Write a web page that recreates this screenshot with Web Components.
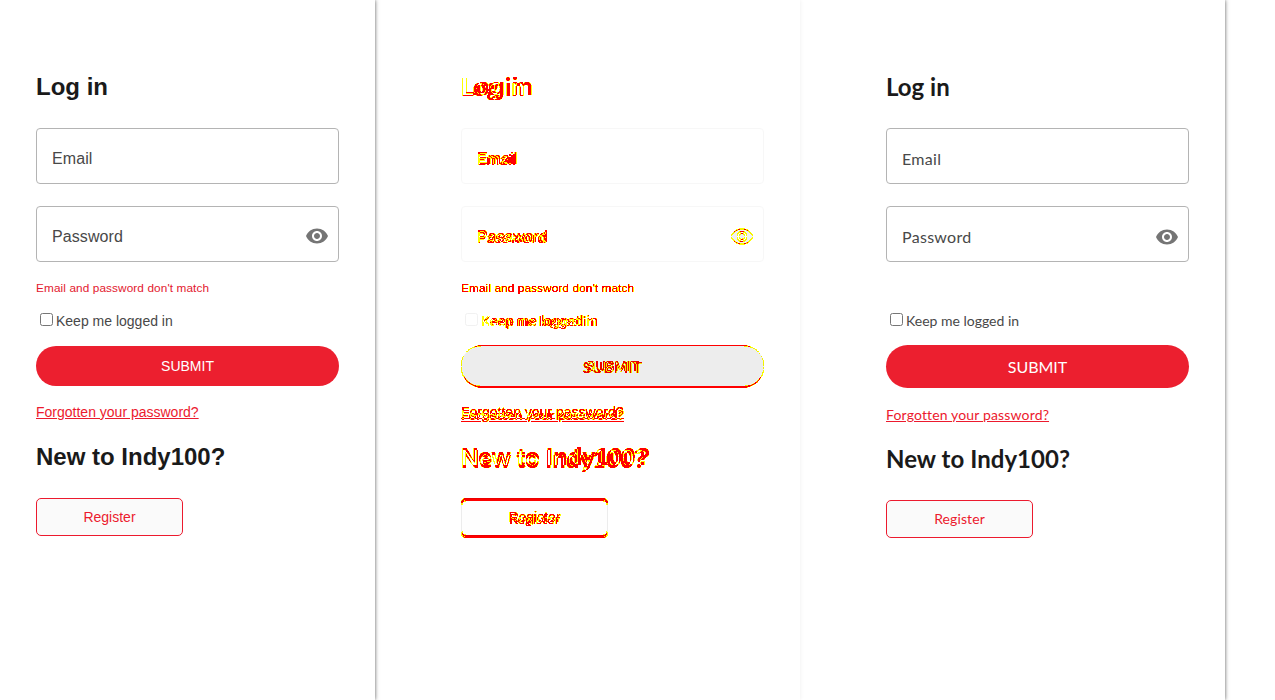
<!DOCTYPE html>
<html lang="en">
<head>
<meta charset="utf-8">
<title>Log in – visual comparison</title>
<style>
body { margin: 0; background: #fff; overflow: hidden; }
</style>
</head>
<body>
<compare-board></compare-board>
<script>
class TextInput extends HTMLElement {
  connectedCallback() {
    const root = this.attachShadow({ mode: "open" });
    root.innerHTML = `
      <style>
        :host { display: flex; box-sizing: border-box; height: 56px; border: 1px solid #b4b4b4; border-radius: 4px;
          padding: var(--label-pad, 4px) 10px 0 15px; align-items: center; justify-content: space-between;
          font-size: 16px; line-height: 20px; color: #484848; background: #fff; }
        span { letter-spacing: var(--label-space, 0); }
        svg { width: 22px; height: 16px; display: block; margin-top: var(--eye-shift, 0px); }
      </style>
      <span><slot></slot></span>
      ${this.hasAttribute("reveal") ? `<svg viewBox="1 4 22 16" fill="#757575"><path d="M12 4.5C7 4.5 2.73 7.61 1 12c1.73 4.39 6 7.5 11 7.5s9.27-3.11 11-7.5c-1.73-4.39-6-7.5-11-7.5zM12 17c-2.76 0-5-2.24-5-5s2.24-5 5-5 5 2.24 5 5-2.24 5-5 5zm0-8c-1.66 0-3 1.34-3 3s1.34 3 3 3 3-1.34 3-3-1.34-3-3-3z"/></svg>` : ""}`;
  }
}
customElements.define("text-input", TextInput);

class CheckLine extends HTMLElement {
  connectedCallback() {
    const root = this.attachShadow({ mode: "open" });
    root.innerHTML = `
      <style>
        :host { display: flex; height: 20px; font-size: 14px; line-height: 20px; color: #484848; }
        input { width: 13px; height: 13px; margin: 3px 3px 0 4px; }
        span { padding-top: 1px; }
      </style>
      <input type="checkbox"><span><slot></slot></span>`;
  }
}
customElements.define("check-line", CheckLine);

class ActionButton extends HTMLElement {
  connectedCallback() {
    const root = this.attachShadow({ mode: "open" });
    root.innerHTML = `
      <style>
        :host { display: flex; box-sizing: border-box; align-items: center; justify-content: center;
          background: #ec1f2f; color: #fff; border-radius: 22px; line-height: 20px; }
        :host([outline]) { width: 147px; height: 38px; border: 1px solid #ec1a2e; border-radius: 5px;
          color: #ec1a2e; background: #fafafa; font-size: 14px; box-shadow: var(--edge-shadow, none); }
      </style>
      <slot></slot>`;
  }
}
customElements.define("action-button", ActionButton);

class LoginPanel extends HTMLElement {
  connectedCallback() {
    const root = this.attachShadow({ mode: "open" });
    const t = s => this.hasAttribute("bare") ? "" : s;
    root.innerHTML = `
      <style>
        :host { display: block; box-sizing: border-box; width: 375px; height: 700px; padding: 70px 36px 0;
          background: #fff; box-shadow: 0 0 4px rgba(0,0,0,.65);
          font-family: "Liberation Sans", Arial, sans-serif; color: #1a1a1a;
          --label-pad: 6px; --label-space: .1px; --eye-shift: -2px; }
        :host([variant="lato"]) { font-family: Lato, sans-serif; --label-space: .3px; --eye-shift: 0px; }
        h2 { margin: 0; box-sizing: border-box; height: 32px; padding-top: 1px; font-size: 24px; line-height: 32px; font-weight: 700; }
        text-input { margin-top: 26px; }
        text-input + text-input { margin-top: 22px; }
        .error { height: 16px; margin-top: 18px; font-size: 11.8px; line-height: 17px; letter-spacing: .1px; color: #e3182e; }
        check-line { margin-top: 14px; }
        .submit { margin-top: 16px; height: 40px; font-size: 14px; }
        a { display: block; width: max-content; margin-top: 16px; height: 20px; font-size: 14px; line-height: 20px;
          color: #ec1a2e; text-decoration: underline; }
        .new { margin-top: 18px; }
        .reg { margin-top: 26px; }
        :host([variant="lato"]) .submit { margin-top: 15px; height: 43px; font-size: 16px; padding-top: 1px; }
        :host([variant="lato"]) a { margin-top: 17px; letter-spacing: .15px; }
        :host([variant="lato"]) .new { padding-top: 0; letter-spacing: .05px; }
        :host([variant="lato"]) .reg { margin-top: 25px; letter-spacing: .1px; }
      </style>
      <h2>${t("Log in")}</h2>
      <text-input>${t("Email")}</text-input>
      <text-input reveal>${t("Password")}</text-input>
      <div class="error">${this.hasAttribute("error") ? "Email and password don't match" : ""}</div>
      <check-line>${t("Keep me logged in")}</check-line>
      <action-button class="submit">${t("SUBMIT")}</action-button>
      <a>${t("Forgotten your password?")}</a>
      <h2 class="new">${t("New to Indy100?")}</h2>
      <action-button class="reg" outline>${t("Register")}</action-button>`;
  }
}
customElements.define("login-panel", LoginPanel);

class DiffPanel extends HTMLElement {
  connectedCallback() {
    const root = this.attachShadow({ mode: "open" });
    root.innerHTML = `
      <style>
        :host { display: grid; width: 425px; height: 700px; overflow: hidden; isolation: isolate; }
        .ghost, .diff { grid-area: 1 / 1; }
        .ghost { filter: grayscale(1) opacity(.1); }
        .diff { display: grid; isolation: isolate; filter: url(#mark); mix-blend-mode: multiply; background: #000; }
        .diff login-panel { grid-area: 1 / 1; box-shadow: none; }
        .diff .base { --edge-shadow: inset 0 1px 0 #ec1a2e, 0 1px 0 #ec1a2e; }
        .diff .over { mix-blend-mode: difference; }
        svg { position: absolute; width: 0; height: 0; }
      </style>
      <svg><filter id="mark" x="0" y="0" width="1" height="1" color-interpolation-filters="sRGB">
        <feColorMatrix values="0 1 0 0 0  0 1 0 0 0  0 1 0 0 0  0 0 0 0 1"/>
        <feComponentTransfer>
          <feFuncR type="discrete" tableValues="1 1"/>
          <feFuncG type="discrete" tableValues="1 1 1 1 1 1 1 1 0 0 0 0 0 0 0 0 0 0 0 0"/>
          <feFuncB type="discrete" tableValues="1 0 0 0 0 0 0 0 0 0 0 0 0 0 0 0 0 0 0 0"/>
        </feComponentTransfer>
      </filter></svg>
      <div class="ghost"><login-panel bare></login-panel></div>
      <div class="diff"><login-panel class="base" error></login-panel><login-panel class="over" variant="lato"></login-panel></div>`;
  }
}
customElements.define("diff-panel", DiffPanel);

class CompareBoard extends HTMLElement {
  connectedCallback() {
    const root = this.attachShadow({ mode: "open" });
    root.innerHTML = `
      <style>
        :host { display: grid; grid-template-columns: repeat(3, 425px); height: 700px; }
        .cell { overflow: hidden; background: #fff; }
      </style>
      <div class="cell"><login-panel error></login-panel></div>
      <diff-panel></diff-panel>
      <div class="cell"><login-panel variant="lato"></login-panel></div>`;
  }
}
customElements.define("compare-board", CompareBoard);
</script>
</body>
</html>
